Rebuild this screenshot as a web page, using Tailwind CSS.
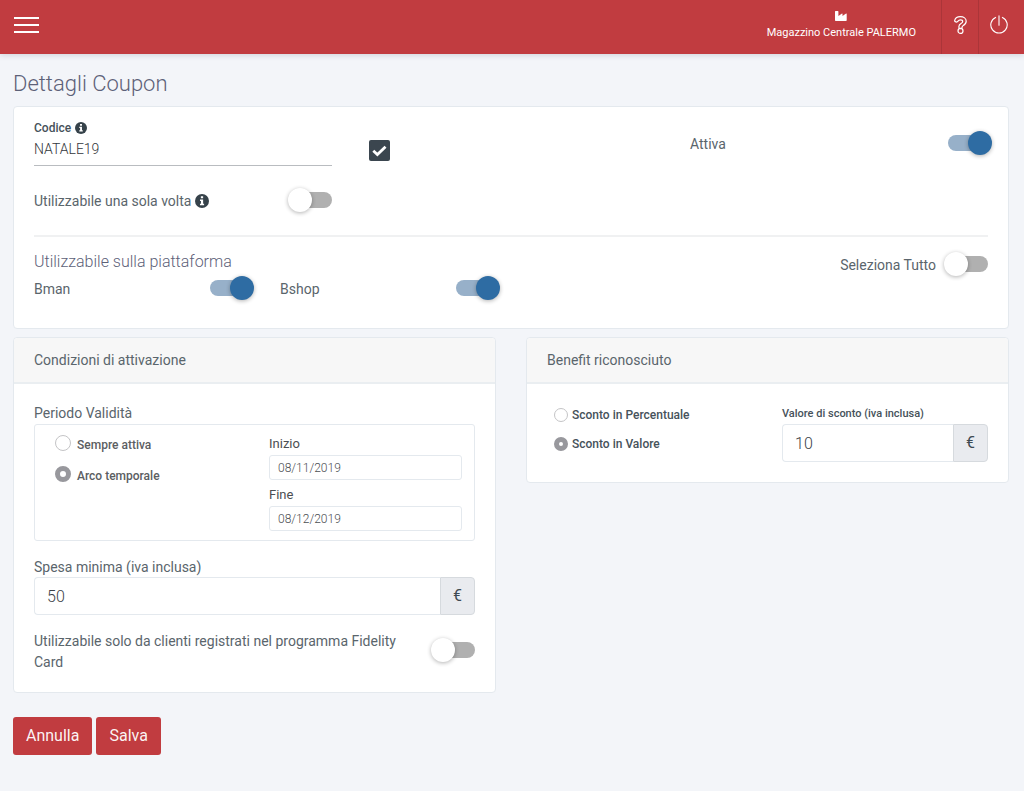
<!DOCTYPE html>
<html lang="it">
<head>
<meta charset="utf-8">
<meta name="viewport" content="width=device-width, initial-scale=1">
<title>Dettagli Coupon</title>
<script src="https://cdn.jsdelivr.net/npm/@tailwindcss/browser@4"></script>
</head>
<body class="min-h-screen bg-[#f3f5f9] font-['Roboto',sans-serif] text-sm text-[#5a656c]">
<svg class="hidden">
  <symbol id="info" viewBox="0 0 16 16">
    <circle cx="8" cy="8" r="8" fill="#36424a"/>
    <path fill="#fff" d="M6.7 2.6h2.6v2.3H6.7zM5.7 6.2h3.6v4.8h1.1v1.8H5.7V11h1.1V8H5.7z"/>
  </symbol>
</svg>

<header class="flex h-[54px] items-stretch bg-[#c13c40] text-white shadow-[0_1px_6px_rgba(60,70,90,0.2)]">
  <button type="button" aria-label="Menu" class="ml-3.5 flex w-[25px] flex-col justify-center gap-[5px] pb-1">
    <span class="h-0.5 w-full bg-white"></span>
    <span class="h-0.5 w-full bg-white"></span>
    <span class="h-0.5 w-full bg-white"></span>
  </button>
  <div class="ml-auto flex flex-col items-center pt-[11px] pr-[25px] text-[11px]">
    <svg class="h-[10px] w-3" viewBox="0 0 12 10" fill="#fff" aria-hidden="true"><path d="M0 .6Q0 0 .6 0h2.200q.6 0 .6.6V5L7 2.600q.5-.3.5.3V5l3.600-2.400q.6-.4.6.3v6.400q0 .7-.7.7H.7Q0 10 0 9.300z"/></svg>
    <span class="mt-[3px] leading-[18px]">Magazzino Centrale PALERMO</span>
  </div>
  <button type="button" aria-label="Aiuto" class="flex w-[37px] justify-center border-l border-[#ab3539] pt-4">
    <svg class="h-[18px] w-[13px]" viewBox="0 0 13 18" fill="none" stroke="#fff" stroke-width="1.200" aria-hidden="true">
      <path d="M.7 4.300C1.400 1.900 3.500.600 6.300.600c3.400 0 5.900 1.900 5.900 4.700 0 2.400-1.500 3.600-3.200 4.500-.6.300-.8.600-.8 1.200a1.700 1.700 0 0 1-3.400 0c0-2 .9-2.900 2.500-3.800.9-.5 1.400-.9 1.400-1.800 0-1-.9-1.600-2.200-1.600-1.200 0-1.900.5-2.500 1.400-.9 1.400-3.600.900-3.300-.9z"/>
      <circle cx="6.500" cy="14.900" r="2.500"/>
    </svg>
  </button>
  <button type="button" aria-label="Esci" class="flex w-[46px] border-l border-[#ab3539] pt-[15px] pl-[11px]">
    <svg class="h-[19px] w-[18px]" viewBox="0 0 18 19" fill="none" stroke="#fff" stroke-width="1.100" stroke-linecap="round" aria-hidden="true">
      <path d="M9 .8v9.400M5.600 2.400a8.200 8.200 0 1 0 6.800 0"/>
    </svg>
  </button>
</header>

<main class="pr-[15px] pb-9 pl-[13px]">
  <h1 class="pt-4 pb-2 text-[22px] leading-7 font-light text-[#5d6178]">Dettagli Coupon</h1>

  <section class="rounded border border-[#e4e9ee] bg-white px-5 pt-[11px] pb-7">
    <div class="grid grid-cols-3 gap-x-[30px]">
      <div>
        <label for="codice" class="flex items-center gap-1 text-xs leading-5 font-medium text-[#46525a]">Codice
          <svg class="size-3" aria-hidden="true"><use href="#info"/></svg></label>
        <input id="codice" type="text" value="NATALE19" class="block h-7 w-full border-b border-[#b9bcc0] pb-1.5 font-light text-[#33373b] outline-none">
      </div>
      <div class="pt-[22px] pl-[7px]">
        <input type="checkbox" checked aria-label="Codice attivo" class="block size-[21px] appearance-none rounded-[2px] bg-[#3b464f] bg-[url('data:image/svg+xml,%3Csvg%20xmlns=%22http://www.w3.org/2000/svg%22%20viewBox=%220%200%2022%2022%22%3E%3Cpath%20d=%22M4.500%2011.200l4.300%204.100%208.500-8.300%22%20fill=%22none%22%20stroke=%22white%22%20stroke-width=%222.900%22/%3E%3C/svg%3E')]">
      </div>
      <div class="flex items-start justify-between pt-4">
        <label for="attiva" class="leading-5">Attiva</label>
        <input id="attiva" type="checkbox" checked class="relative mt-px h-4 w-10 appearance-none rounded-full bg-[#b0b0b0] before:absolute before:-top-1 before:-left-1 before:size-6 before:rounded-full before:bg-white before:shadow-[0_1px_4px_rgba(0,0,0,0.3)] before:content-[''] checked:bg-[#97b0c9] checked:before:left-5 checked:before:bg-[#2e6ca3]">
      </div>
    </div>

    <div class="mt-6 grid grid-cols-3 gap-x-[30px]">
      <div class="flex items-start justify-between">
        <label for="unavolta" class="flex items-center gap-1 leading-[22px]">Utilizzabile una sola volta
          <svg class="size-3.5" aria-hidden="true"><use href="#info"/></svg></label>
        <input id="unavolta" type="checkbox" class="relative mt-0.5 h-4 w-10 appearance-none rounded-full bg-[#b0b0b0] before:absolute before:-top-1 before:-left-1 before:size-6 before:rounded-full before:bg-white before:shadow-[0_1px_4px_rgba(0,0,0,0.3)] before:content-[''] checked:bg-[#97b0c9] checked:before:left-5 checked:before:bg-[#2e6ca3]">
      </div>
    </div>

    <hr class="mt-[23px] border-t-2 border-[#f0f1f2]">

    <div class="flex justify-between pt-[11px]">
      <h2 class="text-base leading-7 font-light text-[#5d6178]">Utilizzabile sulla piattaforma</h2>
      <div class="flex items-start gap-3 pt-1.5">
        <label for="tutto" class="leading-[22px]">Seleziona Tutto</label>
        <input id="tutto" type="checkbox" class="relative mt-0.5 h-4 w-10 appearance-none rounded-full bg-[#b0b0b0] before:absolute before:-top-1 before:-left-1 before:size-6 before:rounded-full before:bg-white before:shadow-[0_1px_4px_rgba(0,0,0,0.3)] before:content-[''] checked:bg-[#97b0c9] checked:before:left-5 checked:before:bg-[#2e6ca3]">
      </div>
    </div>
    <div class="grid grid-cols-4 gap-x-[30px] pt-0.5">
      <div class="flex items-start justify-between">
        <label for="bman" class="leading-[22px]">Bman</label>
        <input id="bman" type="checkbox" checked class="relative mt-0.5 h-4 w-10 appearance-none rounded-full bg-[#b0b0b0] before:absolute before:-top-1 before:-left-1 before:size-6 before:rounded-full before:bg-white before:shadow-[0_1px_4px_rgba(0,0,0,0.3)] before:content-[''] checked:bg-[#97b0c9] checked:before:left-5 checked:before:bg-[#2e6ca3]">
      </div>
      <div class="flex items-start justify-between">
        <label for="bshop" class="leading-[22px]">Bshop</label>
        <input id="bshop" type="checkbox" checked class="relative mt-0.5 h-4 w-10 appearance-none rounded-full bg-[#b0b0b0] before:absolute before:-top-1 before:-left-1 before:size-6 before:rounded-full before:bg-white before:shadow-[0_1px_4px_rgba(0,0,0,0.3)] before:content-[''] checked:bg-[#97b0c9] checked:before:left-5 checked:before:bg-[#2e6ca3]">
      </div>
    </div>
  </section>

  <div class="mt-2 grid grid-cols-2 items-start gap-x-[30px]">
    <section class="rounded border border-[#e4e9ee] bg-white">
      <h2 class="rounded-t border-b-2 border-[#eaeef1] bg-[#f7f7f7] px-5 py-3 leading-5">Condizioni di attivazione</h2>
      <div class="px-5 pt-[19px] pb-[19px]">
        <fieldset>
          <legend class="leading-[21px]">Periodo Validità</legend>
          <div class="flex rounded-[3px] border border-[#e4e9ee] pt-2 pr-3 pb-[9px] pl-5">
            <div class="flex flex-1 flex-col gap-[11px] pt-0.5">
              <label class="flex items-start gap-1.5 text-xs leading-5 font-medium text-[#5b5e62]">
                <input type="radio" name="periodo" class="size-4 appearance-none rounded-full border border-[#c4c4c6] bg-white checked:border-[5px] checked:border-[#98989d]">Sempre attiva</label>
              <label class="flex items-start gap-1.5 text-xs leading-5 font-medium text-[#5b5e62]">
                <input type="radio" name="periodo" checked class="size-4 appearance-none rounded-full border border-[#c4c4c6] bg-white checked:border-[5px] checked:border-[#98989d]">Arco temporale</label>
            </div>
            <div class="w-[193px] text-[#4b4e52]">
              <label for="inizio" class="block text-[13px] leading-[22px]">Inizio</label>
              <input id="inizio" type="text" value="08/11/2019" class="block h-[25px] w-full rounded-[3px] border border-[#e4e9ee] px-2 text-xs font-light outline-none">
              <label for="fine" class="mt-1 block text-[13px] leading-[22px]">Fine</label>
              <input id="fine" type="text" value="08/12/2019" class="block h-[25px] w-full rounded-[3px] border border-[#e4e9ee] px-2 text-xs font-light outline-none">
            </div>
          </div>
        </fieldset>
        <label for="spesa" class="mt-4 block leading-5">Spesa minima (iva inclusa)</label>
        <div class="flex">
          <input id="spesa" type="text" value="50" class="h-[38px] min-w-0 flex-1 rounded-l border border-r-0 border-[#e4e9ee] px-3 text-base font-light text-[#3b4147] outline-none">
          <span class="flex w-[35px] items-center justify-center rounded-r border border-[#d6dade] bg-[#e9ebef] text-base text-[#3e4a52]">€</span>
        </div>
        <div class="mt-4 flex items-start justify-between">
          <label for="fidelity" class="max-w-[370px] leading-[21px]">Utilizzabile solo da clienti registrati nel programma Fidelity Card</label>
          <input id="fidelity" type="checkbox" class="relative mt-[11px] h-4 w-10 shrink-0 appearance-none rounded-full bg-[#b0b0b0] before:absolute before:-top-1 before:-left-1 before:size-6 before:rounded-full before:bg-white before:shadow-[0_1px_4px_rgba(0,0,0,0.3)] before:content-[''] checked:bg-[#97b0c9] checked:before:left-5 checked:before:bg-[#2e6ca3]">
        </div>
      </div>
    </section>

    <section class="rounded border border-[#e4e9ee] bg-white">
      <h2 class="rounded-t border-b-2 border-[#eaeef1] bg-[#f7f7f7] px-5 py-3 leading-5">Benefit riconosciuto</h2>
      <div class="flex px-5 pt-5 pb-5">
        <div class="flex flex-1 flex-col gap-[9px] pt-px pl-[7px]">
          <label class="flex items-center gap-1 text-xs leading-5 font-medium text-[#46525a]">
            <input type="radio" name="sconto" class="size-3.5 appearance-none rounded-full border border-[#c4c4c6] bg-white checked:border-[5px] checked:border-[#98989d]">Sconto in Percentuale</label>
          <label class="flex items-center gap-1 text-xs leading-5 font-medium text-[#46525a]">
            <input type="radio" name="sconto" checked class="size-3.5 appearance-none rounded-full border border-[#c4c4c6] bg-white checked:border-[5px] checked:border-[#98989d]">Sconto in Valore</label>
        </div>
        <div class="w-[206px]">
          <label for="valore" class="block text-[11px] leading-5 font-medium text-[#46525a]">Valore di sconto (iva inclusa)</label>
          <div class="flex">
            <input id="valore" type="text" value="10" class="h-[38px] min-w-0 flex-1 rounded-l border border-r-0 border-[#e4e9ee] px-3 text-base font-light text-[#3b4147] outline-none">
            <span class="flex w-[35px] items-center justify-center rounded-r border border-[#d6dade] bg-[#e9ebef] text-base text-[#3e4a52]">€</span>
          </div>
        </div>
      </div>
    </section>
  </div>

  <div class="mt-6 flex gap-1">
    <button type="button" class="h-[38px] rounded-[3px] bg-[#c13c40] px-[13px] text-base text-white/95">Annulla</button>
    <button type="button" class="h-[38px] rounded-[3px] bg-[#c13c40] px-[13px] text-base text-white/95">Salva</button>
  </div>
</main>
</body>
</html>
